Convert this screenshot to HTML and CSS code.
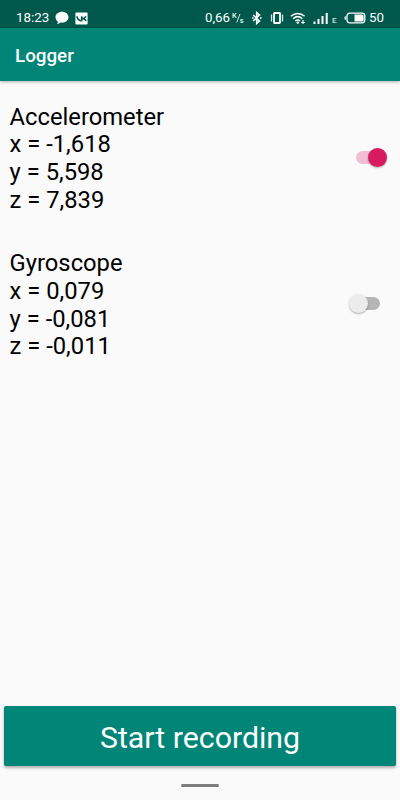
FILE: index.html
```
<!DOCTYPE html>
<html lang="en">
<head>
    <meta charset="UTF-8">
    <meta name="viewport" content="width=device-width, initial-scale=1.0">
    <title>Logger</title>
    <link rel="stylesheet" href="styles.css">
</head>
<body>
    <div class="status-bar">
        <span class="clock">18:23</span>
        <svg class="icon-chat" width="14" height="14" viewBox="0 0 14 14">
            <path fill="#fff" d="M7 .8C3.300.8.5 3.200.5 6.300c0 1.900 1 3.500 2.500 4.500-.1 1-.5 1.700-1 2.300 1.500-.1 2.700-.7 3.500-1.500.5.1 1 .1 1.500.1 3.700 0 6.500-2.300 6.500-5.400S10.700.8 7 .8z"/>
        </svg>
        <svg class="icon-vk" width="13" height="13" viewBox="0 0 13 13">
            <rect x=".4" y=".4" width="12.200" height="12.200" rx="1" fill="#fff"/>
            <path fill="none" stroke="#00574b" stroke-width="1.500" d="M1.800 4.200c.7 2.800 1.900 4.500 4.900 4.500V4.200M10.900 4.200C10.200 5.700 8.700 6.500 6.700 6.500c2.200 0 3.500.7 4.400 2.400"/>
        </svg>
        <div class="status-right">
            <span class="speed">0,66</span>
            <svg class="icon-unit" width="13" height="12" viewBox="0 0 13 12">
                <text x="0" y="6.200" class="unit-text">K</text>
                <path stroke="#e4f3f0" stroke-width=".9" d="M4.700 10.500L8 2"/>
                <text x="7.800" y="10.600" class="unit-text">s</text>
            </svg>
            <svg class="icon-bluetooth" width="12" height="14" viewBox="0 0 12 14">
                <path fill="none" stroke="#fff" stroke-width="1.600" d="M2.200 4l6.300 5.900-2.800 2.500V1.600L8.500 4 2.200 10"/>
                <path fill="#fff" d="M1 6.200h1.600v1.600H1zM9 6.200h1.600v1.600H9z"/>
            </svg>
            <svg class="icon-vibrate" width="14" height="14" viewBox="0 0 14 14">
                <rect x="4" y="2" width="6" height="10" rx=".5" fill="none" stroke="#fff" stroke-width="1.800"/>
                <path stroke="#d5eae6" stroke-width="1.300" d="M1.500 3.500v7M12.500 3.500v7"/>
            </svg>
            <svg class="icon-wifi" width="16" height="14" viewBox="0 0 16 14">
                <path fill="none" stroke="#fff" stroke-width="1.500" d="M.9 5.200c4-3.700 9.700-3.700 13.700 0M3.100 7.700c2.800-2.500 6.500-2.500 9.300 0M5.300 10c1.500-1.300 3.400-1.300 4.900 0"/>
                <path fill="#fff" d="M6.100 11.200c1-.8 2.300-.8 3.300 0l-1.600 2z"/>
                <path stroke="#fff" stroke-width="1.200" d="M13 9v4M11.200 11.500h3.600"/>
            </svg>
            <svg class="icon-signal" width="16" height="12" viewBox="0 0 16 12">
                <path stroke="#fff" stroke-width="2" d="M1.500 9.500V12M5.500 7V12M9.500 4V12M13.700 1V12"/>
            </svg>
            <span class="network">E</span>
            <svg class="icon-battery" width="22" height="12" viewBox="0 0 22 12">
                <rect x="3" y="1.200" width="17.800" height="9.600" rx="2.800" fill="none" stroke="#fff" stroke-width="1.300"/>
                <path fill="#fff" d="M10.500 2.500h7.400q1.700 0 1.700 1.700v3.600q0 1.700-1.700 1.700h-7.400zM1.800 4v4Q.4 8 .4 6t1.400-2z"/>
            </svg>
            <span class="battery-level">50</span>
        </div>
    </div>
    <header>
        <h1>Logger</h1>
    </header>
    <main>
        <section class="sensor">
            <div class="readings">
                <h2>Accelerometer</h2>
                <p>x = -1,618</p>
                <p>y = 5,598</p>
                <p>z = 7,839</p>
            </div>
            <label class="switch">
                <input type="checkbox" checked>
                <span class="thumb"></span>
            </label>
        </section>
        <section class="sensor">
            <div class="readings">
                <h2>Gyroscope</h2>
                <p>x = 0,079</p>
                <p>y = -0,081</p>
                <p>z = -0,011</p>
            </div>
            <label class="switch">
                <input type="checkbox">
                <span class="thumb"></span>
            </label>
        </section>
    </main>
    <footer>
        <button class="record" type="button">Start recording</button>
        <div class="home-handle"></div>
    </footer>
</body>
</html>
```

FILE: styles.css
```
* {
    box-sizing: border-box;
}

body {
    font-family: Roboto, sans-serif;
    margin: 0;
    height: 800px;
    display: flex;
    flex-direction: column;
    background-color: #fafafa;
    color: #000;
    overflow: hidden;
}

.status-bar {
    height: 28px;
    padding: 8px 16px 0;
    display: flex;
    align-items: center;
    background-color: #00574b;
    color: #fff;
    font-size: 13.3px;
    line-height: 20px;
}

    .status-bar svg {
        flex: none;
    }

.clock {
    width: 33px;
}

.icon-chat {
    margin-left: 6px;
}

.icon-vk {
    margin-left: 6px;
}

.status-right {
    margin-left: auto;
    display: flex;
    align-items: center;
}

.icon-unit {
    margin-left: 2px;
}

.unit-text {
    font-size: 7.5px;
    font-weight: 500;
    fill: #e4f3f0;
}

.icon-bluetooth {
    margin-left: 6px;
}

.icon-vibrate {
    margin-left: 7px;
}

.icon-wifi {
    margin-left: 6px;
}

.icon-signal {
    margin-left: 7px;
}

.network {
    margin: 6px 0 0 3px;
    width: 5px;
    font-size: 8px;
    font-weight: 500;
    line-height: 8px;
    color: #cde5e1;
}

.icon-battery {
    margin-left: 7px;
}

.battery-level {
    margin-left: 3px;
}

header {
    height: 53px;
    padding-left: 15px;
    display: flex;
    align-items: center;
    background-color: #008577;
    color: #fff;
    box-shadow: 0 1px 3px rgba(0, 0, 0, 0.3);
}

    header h1 {
        margin: 2px 0 0;
        font-size: 18.8px;
        font-weight: 500;
    }

main {
    flex: 1;
    padding: 22.6px 13px 0 9.6px;
}

.sensor {
    display: flex;
    align-items: center;
    justify-content: space-between;
    margin-bottom: 35.3px;
}

.readings h2,
.readings p {
    margin: 0;
    font-size: 23.75px;
    font-weight: 400;
    line-height: 27.8px;
}

.switch {
    position: relative;
    width: 24px;
    height: 13px;
    margin: 0 7px 4px 0;
    border-radius: 7px;
    background-color: #b5b5b5;
}

    .switch input {
        display: none;
    }

.thumb {
    position: absolute;
    top: -3px;
    left: -7px;
    width: 19px;
    height: 19px;
    border-radius: 50%;
    background-color: #ececec;
    box-shadow: 0 1px 2px rgba(0, 0, 0, 0.3);
}

.switch:has(input:checked) {
    background-color: #f1bdd2;
}

.switch input:checked + .thumb {
    left: 12px;
    background-color: #d81b60;
}

footer {
    height: 94px;
    padding: 0 4px;
}

.record {
    display: block;
    width: 100%;
    height: 60px;
    padding: 2px 0 0;
    border: 0;
    border-radius: 2px;
    background-color: #008577;
    color: #fff;
    font-family: inherit;
    font-size: 30.3px;
    box-shadow: 0 2px 3px rgba(0, 0, 0, 0.3);
}

.home-handle {
    width: 38px;
    height: 3px;
    margin: 18px auto 0;
    border-radius: 2px;
    background-color: #7e7e7e;
}
```
